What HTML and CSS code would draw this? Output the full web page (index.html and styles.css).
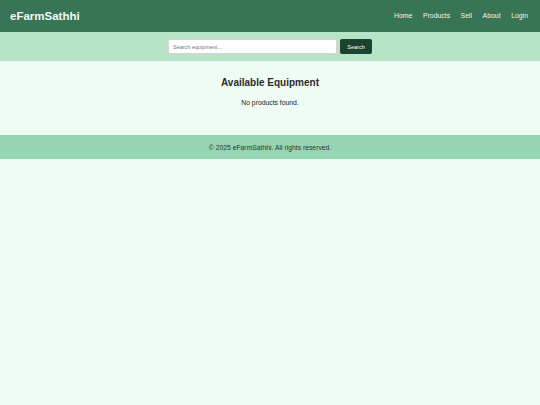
FILE: index.html
```html
<!DOCTYPE html>
<html lang="en">
<head>
	<meta charset="UTF-8">
	<meta name="viewport" content="width=device-width, initial-scale=1.0">
	<title>eFarmSathhi</title>
	<link rel="stylesheet" href="styles.css">
</head>
<body>
	<header class="header">
		<div class="logo">eFarmSathhi</div>
		<nav class="nav">
			<a href="#">Home</a>
			<a href="#">Products</a>
			<a href="#">Sell</a>
			<a href="#">About</a>
			<a href="#">Login</a>
		</nav>
	</header>
	<form action="" class="search-bar">
		<input type="text" name="q" class="search-input" placeholder="Search equipment...">
		<button class="search-btn">Search</button>
	</form>
	<main class="container">
		<h1>Available Equipment</h1>
		<p class="empty">No products found.</p>
	</main>
	<footer class="footer">
		<p>&copy; 2025 eFarmSathhi. All rights reserved.</p>
	</footer>
</body>
</html>
```

FILE: styles.css
```css
* {
	box-sizing: border-box;
}
body {
	margin: 0;
	font-family: "Liberation Sans", Arial, sans-serif;
	background-color: #effcf3;
	color: #222;
}
.header {
	height: 32px; padding: 0 12px 0 10px;
	display: flex; align-items: center; justify-content: space-between;
	background-color: #387456; color: #fff;
	box-shadow: 0 1px 3px rgba(0,0,0,0.15);
}
.logo {
	font-size: 11.5px; font-weight: bold; color: #f4f8f5;
}
.nav {
	display: flex; gap: 10.5px; margin-top: -1px;
}
.nav a {
	color: #eef5f0; text-decoration: none; font-size: 6.9px;
}
.search-bar {
	height: 29px; margin: 0;
	display: flex; align-items: center; justify-content: center; gap: 3px;
	background-color: #b7e4c7;
}
.search-input {
	width: 169px; height: 15px; padding: 0 4px;
	border: 1px solid #d5d5d5; border-radius: 2px;
	font-size: 5.5px; font-family: inherit; background: #fff;
}
.search-btn {
	width: 32px; height: 15px; padding: 0;
	background-color: #1b4332; color: #fff;
	border: none; border-radius: 2px;
	font-size: 5.5px; font-family: inherit;
}
.container {
	text-align: center; padding: 16px 0 29px;
}
.container h1 {
	font-size: 10px; margin: 0 0 11px; color: #2b2b2b;
}
.empty {
	font-size: 6.8px; margin: 0; color: #222;
}
.footer {
	height: 24px; display: flex; align-items: center; justify-content: center;
	background-color: #95d5b2;
}
.footer p {
	margin: 0; font-size: 6.8px; color: #333;
}
```
